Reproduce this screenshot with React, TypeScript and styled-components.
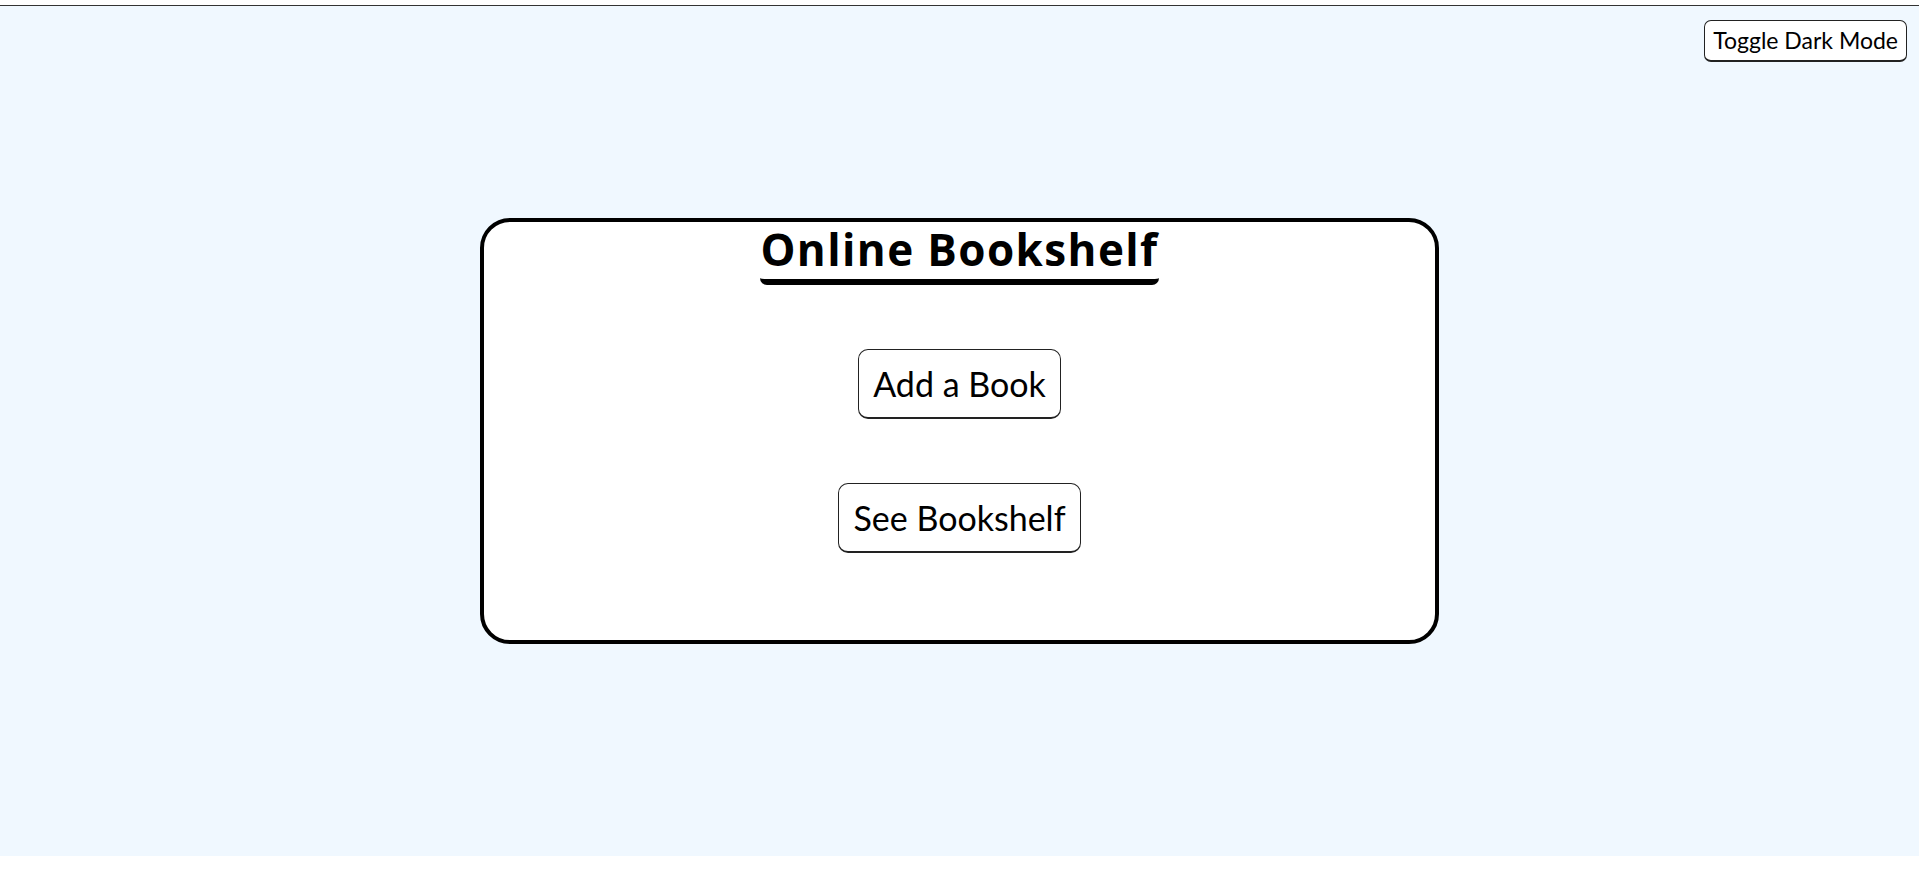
import React from "react";
import styled, { createGlobalStyle } from "styled-components";

const GlobalStyle = createGlobalStyle`
  html, body {
    margin: 0;
    padding: 0;
    background: #ffffff;
  }
  body {
    padding-top: 5px;
    font-family: "Lato", "Open Sans", sans-serif;
    color: #000;
  }
  * { box-sizing: border-box; }
`;

const Page = styled.div`
  display: grid;
  grid-template-columns: 1fr;
  grid-template-rows: 1fr;
  height: 851px;
  border-top: 1px solid #333;
  background: #f0f8ff;
`;

const ToggleButton = styled.button`
  grid-area: 1 / 1;
  align-self: start;
  justify-self: end;
  margin: 14px 12px 0 0;
  font-family: "Lato", sans-serif;
  font-size: 23px;
  line-height: 29px;
  padding: 5px 8px;
  background: #fff;
  color: #000;
  border: 1px solid #222;
  border-bottom-width: 2px;
  border-radius: 7px;
  cursor: pointer;
`;

const Card = styled.main`
  grid-area: 1 / 1;
  place-self: center;
  width: 50%;
  display: flex;
  flex-direction: column;
  align-items: center;
  gap: 64px;
  padding: 0 0 87px;
  background: #fff;
  border: 4px solid #000;
  border-radius: 30px;
`;

const Title = styled.h1`
  margin: 0;
  font-family: "Open Sans", sans-serif;
  font-weight: 700;
  font-size: 44px;
  letter-spacing: 1.4px;
  line-height: 51px;
  padding: 2px 0 4px;
  border-bottom: 6px solid #000;
  border-radius: 7px;
`;

const ActionButton = styled.button`
  font-family: "Lato", sans-serif;
  font-size: 34px;
  line-height: 41px;
  padding: 13px 14px;
  background: #fff;
  color: #000;
  border: 1px solid #222;
  border-bottom-width: 2px;
  border-radius: 10px;
  cursor: pointer;
`;

export default function App() {
  return (
    <>
      <GlobalStyle />
      <Page>
        <ToggleButton>Toggle Dark Mode</ToggleButton>
        <Card>
          <Title>Online Bookshelf</Title>
          <ActionButton>Add a Book</ActionButton>
          <ActionButton>See Bookshelf</ActionButton>
        </Card>
      </Page>
    </>
  );
}
